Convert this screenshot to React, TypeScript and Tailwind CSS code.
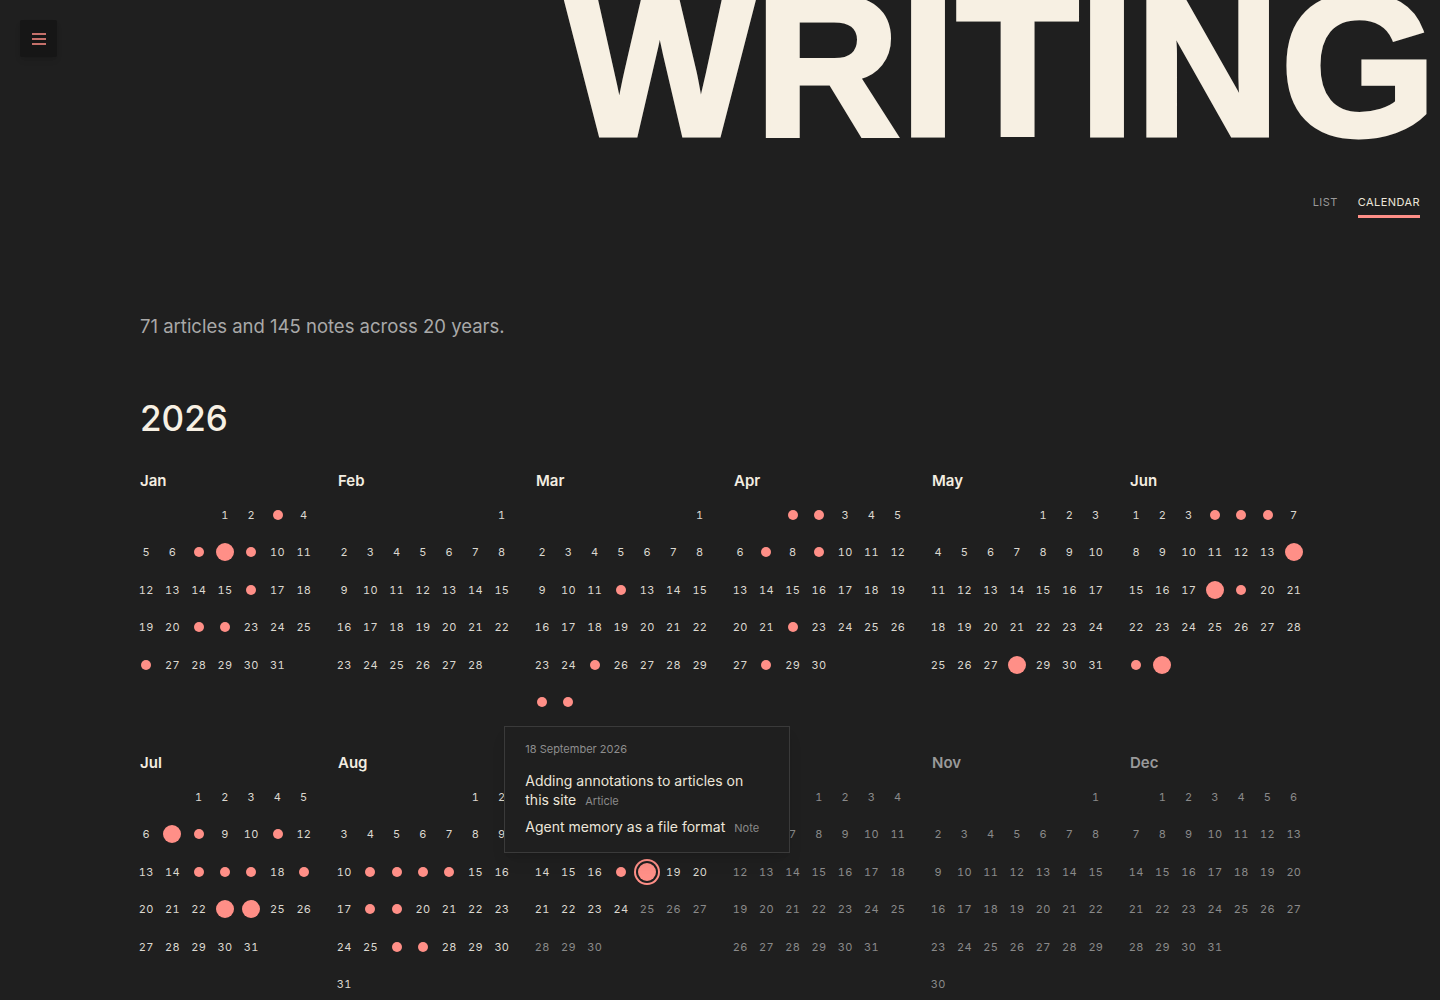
import { Fragment } from "react";

type Dot = "s" | "l";

const MONTHS = ["Jan", "Feb", "Mar", "Apr", "May", "Jun", "Jul", "Aug", "Sep", "Oct", "Nov", "Dec"];

// posts per day, s = note, l = article
const DOTS: Record<number, Record<number, Dot>> = {
  0: { 3: "s", 7: "s", 8: "l", 9: "s", 16: "s", 21: "s", 22: "s", 26: "s" },
  1: {},
  2: { 12: "s", 25: "s", 30: "s", 31: "s" },
  3: { 1: "s", 2: "s", 7: "s", 9: "s", 22: "s", 28: "s" },
  4: { 28: "l" },
  5: { 4: "s", 5: "s", 6: "s", 14: "l", 18: "l", 19: "s", 29: "s", 30: "l" },
  6: { 7: "l", 8: "s", 11: "s", 15: "s", 16: "s", 17: "s", 19: "s", 23: "l", 24: "l" },
  7: { 11: "s", 12: "s", 13: "s", 14: "s", 18: "s", 19: "s", 26: "s", 27: "s" },
  8: { 17: "s", 18: "l" },
  9: {},
  10: {},
  11: {},
};

const YEAR = 2026;
const TODAY = { m: 8, d: 24 };

function Tooltip() {
  return (
    <div className="absolute bottom-full left-1/2 -translate-x-1/2 z-10 w-[286px] whitespace-normal bg-[#1f1f1f] border border-[#3a3a3a] px-5 pt-[15px] pb-[14px] text-left shadow-lg">
      <p className="text-[11px] leading-[14px] text-[#8e8e8e]">18 September 2026</p>
      <div className="mt-[15px] space-y-[6px]">
        <p className="text-[14px] leading-[19px] text-[#ece6da]">
          Adding annotations to articles on this site
          <span className="ml-[9px] text-[11px] text-[#8a8a8a]">Article</span>
        </p>
        <p className="text-[14px] leading-[19px] text-[#ece6da]">
          Agent memory as a file format
          <span className="ml-[9px] text-[11px] text-[#8a8a8a]">Note</span>
        </p>
      </div>
    </div>
  );
}

function Month({ index }: { index: number }) {
  const offset = (new Date(YEAR, index, 1).getDay() + 6) % 7;
  const total = new Date(YEAR, index + 1, 0).getDate();
  const future = index > TODAY.m;
  const days = Array.from({ length: total }, (_, i) => i + 1);

  return (
    <div>
      <h3 className={`text-[15px] leading-5 font-semibold mb-[5px] ${future ? "text-[#9a9a9a]" : "text-[#f3ede1]"}`}>
        {MONTHS[index]}
      </h3>
      <div className="grid grid-cols-7 gap-x-[14px] auto-rows-[37.5px]">
        {Array.from({ length: offset }).map((_, i) => (
          <div key={"e" + i} />
        ))}
        {days.map((d) => {
          const dot = DOTS[index]?.[d];
          const dim = future || (index === TODAY.m && d > TODAY.d);
          const hovered = index === 8 && d === 18;
          return (
            <div key={d} className="relative flex items-center justify-center whitespace-nowrap">
              {dot ? (
                <span
                  className={`block shrink-0 rounded-full bg-[#ff8f87] ${dot === "l" ? "w-[18px] h-[18px]" : "w-[10px] h-[10px]"} ${
                    hovered ? "ring-2 ring-[#ff8f87] ring-offset-2 ring-offset-[#1f1f1f]" : ""
                  }`}
                />
              ) : (
                <span className={`text-[11px] tabular-nums tracking-[0.03em] ${dim ? "text-[#8a8a8a]" : "text-[#dcd8d0]"}`}>{d}</span>
              )}
              {hovered && <Tooltip />}
            </div>
          );
        })}
      </div>
    </div>
  );
}

export default function App() {
  return (
    <div className="min-h-screen bg-[#1f1f1f] overflow-hidden relative pb-24" style={{ fontFamily: "Inter, 'Noto Sans', sans-serif" }}>
      {/* menu button */}
      <button className="absolute top-5 left-5 w-[37px] h-[37px] bg-[#161616] rounded-[2px] shadow-md flex items-center justify-center">
        <svg width="14" height="12" viewBox="0 0 14 12" fill="none">
          <path d="M0 1h14M0 6h14M0 11h14" stroke="#ff8f87" strokeWidth="1.5" />
        </svg>
      </button>

      {/* big title */}
      <header className="-mt-[34px] text-right pr-[3px]">
        <h1
          className="text-[200px] leading-none font-bold text-[#f7f0e3] tracking-[0.0035em] whitespace-nowrap [-webkit-text-stroke:5px_#f7f0e3]"
          style={{ fontFamily: "'Liberation Sans', Arial, sans-serif" }}
        >
          WRITING
        </h1>
      </header>

      {/* view toggle */}
      <nav className="mt-[28px] pr-5 flex justify-end gap-5 text-[11px] leading-4 tracking-[0.04em]">
        <div className="flex flex-col">
          <span className="text-[#9a9a9a]">LIST</span>
          <span className="mt-[5px] h-[3px]" />
        </div>
        <div className="flex flex-col">
          <span className="text-[#ece6da]">CALENDAR</span>
          <span className="mt-[5px] h-[3px] bg-[#ff8f87]" />
        </div>
      </nav>

      <main className="px-[140px]">
        <p className="mt-[94px] text-[18.5px] leading-7 text-[#a9a9a9]">71 articles and 145 notes across 20 years.</p>

        <h2 className="mt-[55px] text-[35px] leading-[46px] font-medium text-[#f7f0e3]">2026</h2>

        <div className="mt-[30px] grid grid-cols-6 gap-x-7 gap-y-8">
          {MONTHS.map((m, i) => (
            <Fragment key={m}>
              <Month index={i} />
            </Fragment>
          ))}
        </div>
      </main>
    </div>
  );
}
